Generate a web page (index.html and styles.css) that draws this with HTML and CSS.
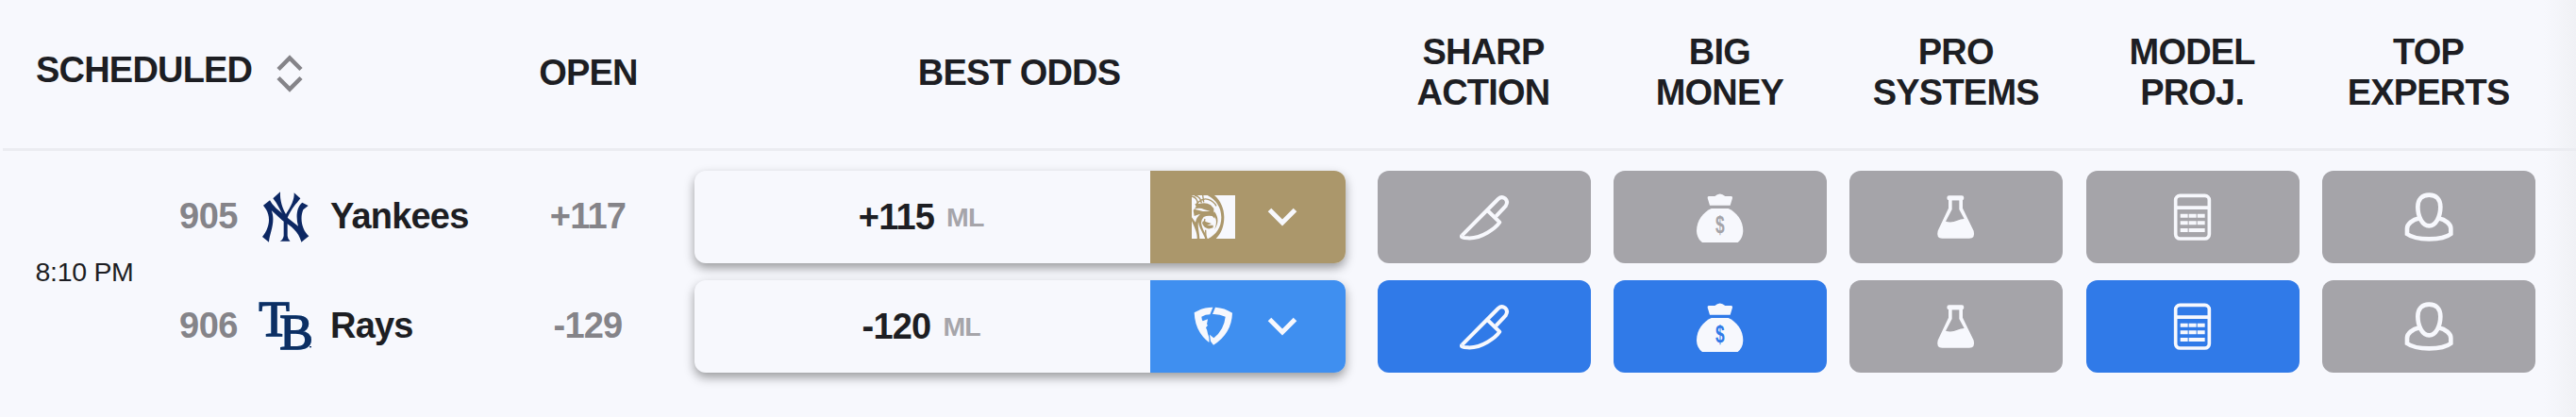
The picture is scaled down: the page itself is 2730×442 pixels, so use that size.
FILE: index.html
```html
<!DOCTYPE html>
<html lang="en">
<head>
  <meta charset="UTF-8" />
  <title>MLB Pro Report</title>
  <link rel="stylesheet" href="styles.css">
</head>
<body>

  <!-- icon sprite -->
  <svg class="sprite" width="0" height="0">
    <symbol id="knife" viewBox="39 30 180 180">
      <g fill="none" stroke="#f7f8fd" stroke-width="12" stroke-linejoin="round">
        <path d="M58 179 L173 63 Q184 53 195 61 Q206 71 197 85 L166 118" />
        <path d="M139 99 L178 137 C166 154 122 190 76 187 Q52 186 58 179" />
      </g>
    </symbol>
    <symbol id="bag" viewBox="41 30 180 180">
      <path fill="#f7f8fd" d="M94 54 H114 Q130 39 147 54 H167 Q171 55 170 60 L163 83 H98 L91 60 Q90 55 94 54Z" />
      <path fill="#f7f8fd" d="M103 93 H157 C182 104 204 130 204 165 Q203 188 187 201 H74 Q57 188 56 165 C56 130 78 104 103 93Z" />
      <text class="dollar" x="116" y="172" textLength="29" lengthAdjust="spacingAndGlyphs">$</text>
    </symbol>
    <symbol id="flask" viewBox="42 30 180 180">
      <rect x="103" y="52" width="54" height="15" rx="7" fill="#f7f8fd" />
      <path fill="#f7f8fd" fill-rule="evenodd" d="M108 60 V92 L74 164 Q68 188 88 188 H174 Q194 187 188 164 L153 92 V60Z M119 67 V96 L99 134 Q117 140 136 131 Q147 126 158 126 L142 96 V67Z" />
    </symbol>
    <symbol id="calc" viewBox="43 30 180 180">
      <rect x="78" y="52" width="107" height="137" rx="14" fill="none" stroke="#f7f8fd" stroke-width="11" />
      <path fill="#f7f8fd" d="M78 85h107v11H78z M93 110h24v12H93z M120 110h24v12h-24z M147 110h24v12h-24z M93 133h24v12H93z M120 133h24v12h-24z M147 133h24v12h-24z M93 156h24v12H93z M120 156h51v12h-51z" />
    </symbol>
    <symbol id="expert" viewBox="43 30 180 180">
      <g fill="none" stroke="#f7f8fd" stroke-width="14">
        <path d="M134 50 C157 50 170 65 170 88 C170 118 156 148 134 148 C112 148 98 118 98 88 C98 65 111 50 134 50Z" />
        <path d="M104 124 C80 129 64 142 64 157 V174 C80 186 108 190 134 190 C160 190 188 186 203 174 V157 C203 142 187 129 163 124" />
      </g>
    </symbol>
    <symbol id="chevron" viewBox="0 0 32 20">
      <path d="M2.500 2.500 L16 16 L29.500 2.500" fill="none" stroke="#f7f8fd" stroke-width="5" />
    </symbol>
  </svg>

  <div class="report">
    <div class="header">
      <div class="head-scheduled">
        SCHEDULED
        <svg class="sort" viewBox="0 0 28 40">
          <path d="M2 15.500 L14 3.500 L26 15.500 M2 24.500 L14 36.500 L26 24.500" />
        </svg>
      </div>
      <div class="head-open">OPEN</div>
      <div class="head-odds">BEST ODDS</div>
      <div class="signals">
        <div>SHARP<br>ACTION</div>
        <div>BIG<br>MONEY</div>
        <div>PRO<br>SYSTEMS</div>
        <div>MODEL<br>PROJ.</div>
        <div>TOP<br>EXPERTS</div>
      </div>
    </div>

    <div class="game">
      <div class="time">8:10 PM</div>
      <div class="sides">

        <div class="side">
          <div class="rot">905</div>
          <svg class="team-logo" viewBox="42 36 168 168">
            <g class="ny">
              <path d="M111 40 L88 61 L98 74 C106 88 113 102 122 118 V180 Q120 192 110 197 H143 Q135 192 134 180 V122 C144 101 156 82 164 75 L175 61 L155 43 C157 65 144 88 129 111 C119 94 109 68 111 40Z" />
              <path d="M78 67 L57 83 L66 96 C80 119 79 151 54 183 L75 200 C76 174 98 135 83 99 L118 131 C146 148 171 168 178 200 L202 181 C181 163 172 125 184 97 L200 84 L181 74 C163 88 160 120 168 149 L132 121 L98 92 Q84 80 78 67Z" />
            </g>
          </svg>
          <div class="team">Yankees</div>
          <div class="open">+117</div>
          <div class="odds">
            <div class="price">+115 <span>ML</span></div>
            <div class="book mgm">
              <svg class="book-logo" viewBox="0 0 138 138">
                <path fill="#f7f8fd" d="M0 0h138v138H0z" />
                <g fill="#ab976b">
                  <path d="M50 0 H72 C92 18 103 42 103 70 C103 99 93 122 77 138 H52 C78 125 94 102 94 70 C94 40 78 14 50 0Z" />
                  <path d="M5 48 L14 36 L10 28 L28 26 Q46 22 60 31 L70 42 V54 L75 60 L73 74 L65 66 Q49 63 38 69 Q28 80 31 92 C34 110 46 123 50 138 L43 138 C35 118 23 103 21 85 C18 100 24 117 25 138 H17 C18 119 8 101 0 82 V70 L12 86 Q14 70 28 59 L8 66Z" />
                  <path d="M33 88 C38 103 50 111 68 103 L68 95 L48 96 L63 90 L46 85 Q36 78 33 88Z M72 52 C86 70 86 91 72 109 C81 90 80 72 67 61Z" />
                </g>
                <g fill="none" stroke="#ab976b" stroke-width="4">
                  <path d="M0 3 Q18 7 19 27 M35 0 L38 22 M9 0 Q29 5 31 25 M13 30 Q32 7 52 13 Q69 18 78 34 M42 75 Q37 89 47 100 M44 110 L45 138" />
                </g>
                <path d="M8 44 Q26 38 39 45 L59 51 L35 51Z" fill="#f7f8fd" />
              </svg>
              <svg class="chevron"><use href="#chevron" /></svg>
            </div>
          </div>
          <div class="signals">
            <div class="tile"><svg><use href="#knife" /></svg></div>
            <div class="tile"><svg><use href="#bag" /></svg></div>
            <div class="tile"><svg><use href="#flask" /></svg></div>
            <div class="tile"><svg><use href="#calc" /></svg></div>
            <div class="tile"><svg><use href="#expert" /></svg></div>
          </div>
        </div>

        <div class="side">
          <div class="rot">906</div>
          <svg class="team-logo" viewBox="42 384 168 168">
            <g class="tb">
              <text x="43" y="499">T</text>
              <text x="109" y="539">B</text>
              <path d="M204 533h6" />
            </g>
          </svg>
          <div class="team">Rays</div>
          <div class="open">-129</div>
          <div class="odds">
            <div class="price">-120 <span>ML</span></div>
            <div class="book fanduel">
              <svg class="book-logo" viewBox="159 430 138 138">
                <path fill="#f7f8fd" d="M167 455 Q194 438 226 438 L217 461 Q203 461 190 468 Q191 479 194 482 L210 476 L207 492 L210 495 L204 503 Q209 512 210 522 Q216 534 214 550 Q169 516 167 455Z" />
                <path fill="#f7f8fd" d="M234 438 Q264 440 288 456 Q286 521 228 558 L219 546 L216 525 L229 536 Q262 509 266 468 Q247 459 225 460Z" />
              </svg>
              <svg class="chevron"><use href="#chevron" /></svg>
            </div>
          </div>
          <div class="signals">
            <div class="tile active"><svg><use href="#knife" /></svg></div>
            <div class="tile active"><svg><use href="#bag" /></svg></div>
            <div class="tile"><svg><use href="#flask" /></svg></div>
            <div class="tile active"><svg><use href="#calc" /></svg></div>
            <div class="tile"><svg><use href="#expert" /></svg></div>
          </div>
        </div>

      </div>
    </div>
  </div>

</body>
</html>
```
FILE: styles.css
```css
* {
  box-sizing: border-box;
}

body {
  margin: 0;
  font-family: "Liberation Sans", Helvetica, Arial, sans-serif;
  font-size: 38px;
  font-weight: bold;
  line-height: 43px;
  letter-spacing: -0.8px;
  color: #1d1e23;
  background: #f7f8fd;
}

svg {
  display: block;
  flex: none;
  overflow: visible;
}

.sprite {
  position: absolute;
}

.report {
  width: 2730px;
  height: 442px;
  overflow: hidden;
  background: linear-gradient(to left, #f0f1f5, #f7f8fd 34px);
}

/* header */
.header {
  display: flex;
  align-items: center;
  height: 160px;
  margin-left: 3px;
  padding-bottom: 3px;
  border-bottom: 3px solid #ebecf1;
}

.head-scheduled {
  display: flex;
  align-items: center;
  width: 556px;
  padding-left: 35px;
  padding-bottom: 6px;
}

.sort {
  width: 28px;
  height: 40px;
  margin: 7px 0 0 26px;
  fill: none;
  stroke: #858489;
  stroke-width: 4.500;
}

.head-open {
  width: 129px;
  text-align: center;
}

.head-odds {
  width: 690px;
  margin: 0 34px 0 47px;
  text-align: center;
}

.signals {
  display: grid;
  grid-template-columns: repeat(5, 226px);
  column-gap: 24.400px;
  text-align: center;
}

/* game */
.game {
  display: flex;
  align-items: center;
  margin-top: 21px;
}

.time {
  width: 190px;
  padding-left: 37.500px;
  font-size: 28.500px;
  font-weight: normal;
  letter-spacing: -0.3px;
}

.sides {
  display: flex;
  flex-direction: column;
  gap: 18px;
}

.side {
  display: flex;
  align-items: center;
  height: 98px;
}

.rot,
.team,
.open {
  padding-bottom: 2px;
}

.rot {
  width: 84px;
  letter-spacing: -0.5px;
}

.rot,
.open {
  color: #858489;
}

.team-logo {
  width: 56px;
  height: 56px;
}

.ny {
  fill: #0c2763;
}

.tb {
  fill: #0d2f63;
  stroke: #0d2f63;
  stroke-width: 4;
  font-family: "Liberation Serif", serif;
  font-size: 160px;
  font-weight: normal;
  filter: drop-shadow(0 0 2px #6ea8e0);
}

.team {
  width: 229px;
  padding-left: 20px;
}

.open {
  width: 128px;
  text-align: center;
}

.odds {
  display: flex;
  width: 690px;
  height: 98px;
  margin: 0 34px 0 49px;
  border-radius: 12px;
  background: #f7f8fd;
  box-shadow: 0 5px 11px rgba(0, 0, 0, 0.38);
}

.price {
  display: flex;
  flex: 1;
  align-items: center;
  justify-content: center;
  gap: 13px;
  padding-right: 2px;
}

.price span {
  font-size: 28.500px;
  color: #a6a5aa;
}

.book {
  display: flex;
  align-items: center;
  width: 207.500px;
  padding-left: 44px;
  border-radius: 0 12px 12px 0;
}

.mgm {
  background: #ab976b;
}

.fanduel {
  background: #3f8ff0;
}

.book-logo {
  width: 46px;
  height: 46px;
}

.chevron {
  width: 32px;
  height: 20px;
  margin-left: 34px;
}

.tile {
  --tile: #a5a4a9;
  display: flex;
  align-items: center;
  justify-content: center;
  height: 98px;
  border-radius: 12px;
  background: var(--tile);
}

.side .signals {
  margin-left: -0.5px;
}

.tile.active {
  --tile: #307ae8;
}

.tile svg {
  width: 60px;
  height: 60px;
}

.dollar {
  fill: var(--tile);
  font-size: 76px;
  letter-spacing: 0;
}
```
